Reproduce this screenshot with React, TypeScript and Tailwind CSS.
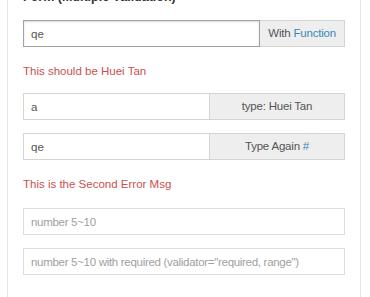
import React from "react";

// Bootstrap-like input group with an add-on on the right
function InputGroup({
  value,
  addon,
  inputWidth,
  focused = false,
}: {
  value: string;
  addon: React.ReactNode;
  inputWidth?: string;
  focused?: boolean;
}) {
  return (
    <div className="flex h-[27px]">
      <input
        readOnly
        defaultValue={value}
        className={
          focused
            ? "min-w-0 flex-1 h-full border border-[#a3a3a3] bg-white px-[7px] text-[11.5px] text-[#555] shadow-[inset_0_1px_2px_rgba(0,0,0,0.15)] outline-none"
            : `${inputWidth} h-full border border-[#d4d4d4] bg-white px-[7px] text-[11.5px] text-[#555] outline-none`
        }
      />
      <div
        className={
          focused
            ? "flex h-full items-center border border-l-0 border-[#d4d4d4] bg-[#eeeeee] px-[8px] text-[11.5px] tracking-[-0.2px] text-[#555]"
            : "flex h-full flex-1 items-center justify-center border border-l-0 border-[#d4d4d4] bg-[#eeeeee] text-[11.5px] tracking-[-0.2px] text-[#555]"
        }
      >
        {addon}
      </div>
    </div>
  );
}

function ErrorMsg({ children }: { children: React.ReactNode }) {
  return <p className="text-[11.5px] leading-[14px] text-[#c8514e]">{children}</p>;
}

export default function App() {
  return (
    <div
      className="h-[297px] w-[370px] overflow-hidden bg-white"
      style={{ fontFamily: '"Liberation Sans", Arial, sans-serif' }}
    >
      <div className="ml-[7px] h-[320px] w-[354px] border border-t-0 border-[#e6e6e6] px-[15px]">
        <h3 className="mt-[-10px] text-[12.5px] font-bold leading-[14px] text-[#333]">
          Form (Multiple Validation)
        </h3>

        <div className="mt-[16px]">
          <InputGroup
            focused
            value="qe"
            addon={
              <span>
                With <span className="text-[#3a87b8]">Function</span>
              </span>
            }
          />
        </div>

        <div className="mt-[17px]">
          <ErrorMsg>This should be Huei Tan</ErrorMsg>
        </div>

        <div className="mt-[15px] flex flex-col gap-[13px]">
          <InputGroup value="a" inputWidth="w-[187px]" addon="type: Huei Tan" />
          <InputGroup
            value="qe"
            inputWidth="w-[187px]"
            addon={
              <span>
                Type Again <span className="text-[#3a87b8]">#</span>
              </span>
            }
          />
        </div>

        <div className="mt-[17px]">
          <ErrorMsg>This is the Second Error Msg</ErrorMsg>
        </div>

        <div className="mt-[17px] flex flex-col gap-[13px]">
          <input
            readOnly
            placeholder="number 5~10"
            className="h-[27px] w-full border border-[#dddddd] bg-white px-[7px] text-[11.5px] tracking-[-0.3px] text-[#555] outline-none placeholder:text-[#a0a0a0]"
          />
          <input
            readOnly
            placeholder='number 5~10 with required (validator="required, range")'
            className="h-[27px] w-full border border-[#dddddd] bg-white px-[7px] text-[11.5px] tracking-[-0.3px] text-[#555] outline-none placeholder:text-[#a0a0a0]"
          />
        </div>
      </div>
    </div>
  );
}
